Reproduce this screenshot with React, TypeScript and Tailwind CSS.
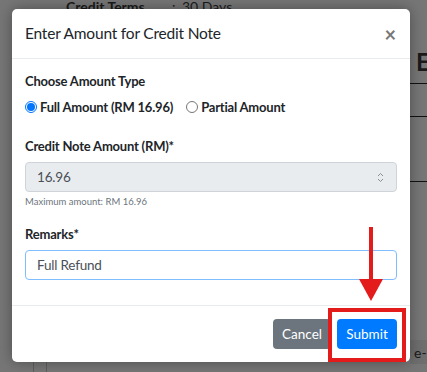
import React from "react";

// ─── Backdrop page (dimmed, behind the modal) ────────────────────────────────

function BackPage() {
  return (
    <div className="absolute inset-0 overflow-hidden bg-[#767676]">
      <div className="absolute left-[66px] top-[-2px] flex text-[14px] leading-[18px] text-[#1a1a1a]">
        <span className="w-[106px] font-bold">Credit Terms</span>
        <span className="w-[10px]">:</span>
        <span>30 Days</span>
      </div>
      <div className="absolute left-[416px] top-[44px] text-[24px] font-bold text-[#1a1a1a]">E</div>
      <div className="absolute left-[410px] top-[83px] h-px w-[20px] bg-[#111]" />
      <div className="absolute left-[410px] top-[116px] h-px w-[20px] bg-[#111]" />
      <div className="absolute left-[410px] top-[181px] h-px w-[20px] bg-[#111]" />
      <div className="absolute left-[410px] top-[340px] h-[24px] w-[20px] bg-[#6e6e6e]" />
      <div className="absolute left-[414px] top-[342px] text-[14px] text-[#1a1a1a]">e-</div>
      <div className="absolute left-[33px] top-[362px] h-[10px] w-px bg-[#5f5f5f]" />
      <div className="absolute left-[46px] top-[362px] h-[10px] w-px bg-[#5f5f5f]" />
    </div>
  );
}

// ─── Radio ───────────────────────────────────────────────────────────────────

function Radio({ label, checked }: { label: string; checked?: boolean }) {
  return (
    <label className="flex items-center gap-[3px]">
      {checked ? (
        <span className="flex h-[12px] w-[12px] items-center justify-center rounded-full border border-[#0075ff] bg-white">
          <span className="h-[8px] w-[8px] rounded-full bg-[#0075ff]" />
        </span>
      ) : (
        <span className="h-[12px] w-[12px] rounded-full border border-[#767676] bg-white" />
      )}
      <span className="font-bold text-[#212529]">{label}</span>
    </label>
  );
}

// ─── App ─────────────────────────────────────────────────────────────────────

export default function App() {
  return (
    <div
      className="relative h-[372px] w-[427px] overflow-hidden"
      style={{ fontFamily: "Lato, 'Noto Sans', sans-serif" }}
    >
      <BackPage />

      <div className="relative pl-[12px] pt-[9px]">
        <div className="w-[398px] rounded-[5px] bg-white shadow-[0_0_14px_rgba(0,0,0,0.35)]">
          {/* Header */}
          <div className="flex h-[50px] items-center justify-between border-b border-[#e9ecef] pl-[13px] pr-[14px]">
            <h5 className="text-[15.5px] tracking-[-0.2px] text-[#212529]">Enter Amount for Credit Note</h5>
            <span className="text-[20px] font-bold leading-none text-[#777]">×</span>
          </div>

          {/* Body */}
          <div className="px-[13px] pt-[13px] pb-[25px] text-[13px] leading-[18px] tracking-[-0.2px]">
            <p className="font-bold text-[#212529]">Choose Amount Type</p>
            <div className="mt-[8px] flex gap-[13px]">
              <Radio label="Full Amount (RM 16.96)" checked />
              <Radio label="Partial Amount" />
            </div>

            <p className="mt-[21px] font-bold text-[#212529]">Credit Note Amount (RM)*</p>
            <div className="mt-[7px] flex h-[30px] items-center justify-between rounded-[4px] border border-[#ced4da] bg-[#e9ecef] pl-[11px] pr-[12px]">
              <span className="text-[13.5px] text-[#495057]">16.96</span>
              <svg width="7" height="11" viewBox="0 0 7 11" fill="none" stroke="#8a8f94" strokeWidth="1">
                <path d="M1 4 L3.5 1.5 L6 4" />
                <path d="M1 7 L3.5 9.5 L6 7" />
              </svg>
            </div>
            <p className="mt-[3px] text-[9.5px] leading-[14px] tracking-normal text-[#6c757d]">Maximum amount: RM 16.96</p>

            <p className="mt-[16px] font-bold text-[#212529]">Remarks*</p>
            <div className="mt-[7px] flex h-[30px] items-center rounded-[4px] border border-[#80bdff] bg-white pl-[11px]">
              <span className="text-[13.5px] text-[#495057]">Full Refund</span>
            </div>
          </div>

          {/* Footer */}
          <div className="flex h-[57px] items-center justify-end gap-[6px] border-t border-[#e9ecef] pr-[13px]">
            <button className="h-[30px] w-[58px] rounded-[4px] bg-[#6c757d] text-[13.5px] text-white">
              Cancel
            </button>
            <button className="h-[30px] w-[60px] rounded-[4px] bg-[#007bff] text-[13.5px] text-white">
              Submit
            </button>
          </div>
        </div>
      </div>

      {/* Annotation: red arrow + red box */}
      <div className="absolute left-[369px] top-[227px] h-[56px] w-[4px] bg-[#e31b1b]" />
      <svg className="absolute left-[359px] top-[279px]" width="24" height="22" viewBox="0 0 24 22">
        <polygon points="0,0 24,0 12,22" fill="#e31b1b" />
      </svg>
      <div className="absolute left-[328px] top-[308px] h-[54px] w-[78px] border-[4px] border-[#e31b1b]" />
    </div>
  );
}
